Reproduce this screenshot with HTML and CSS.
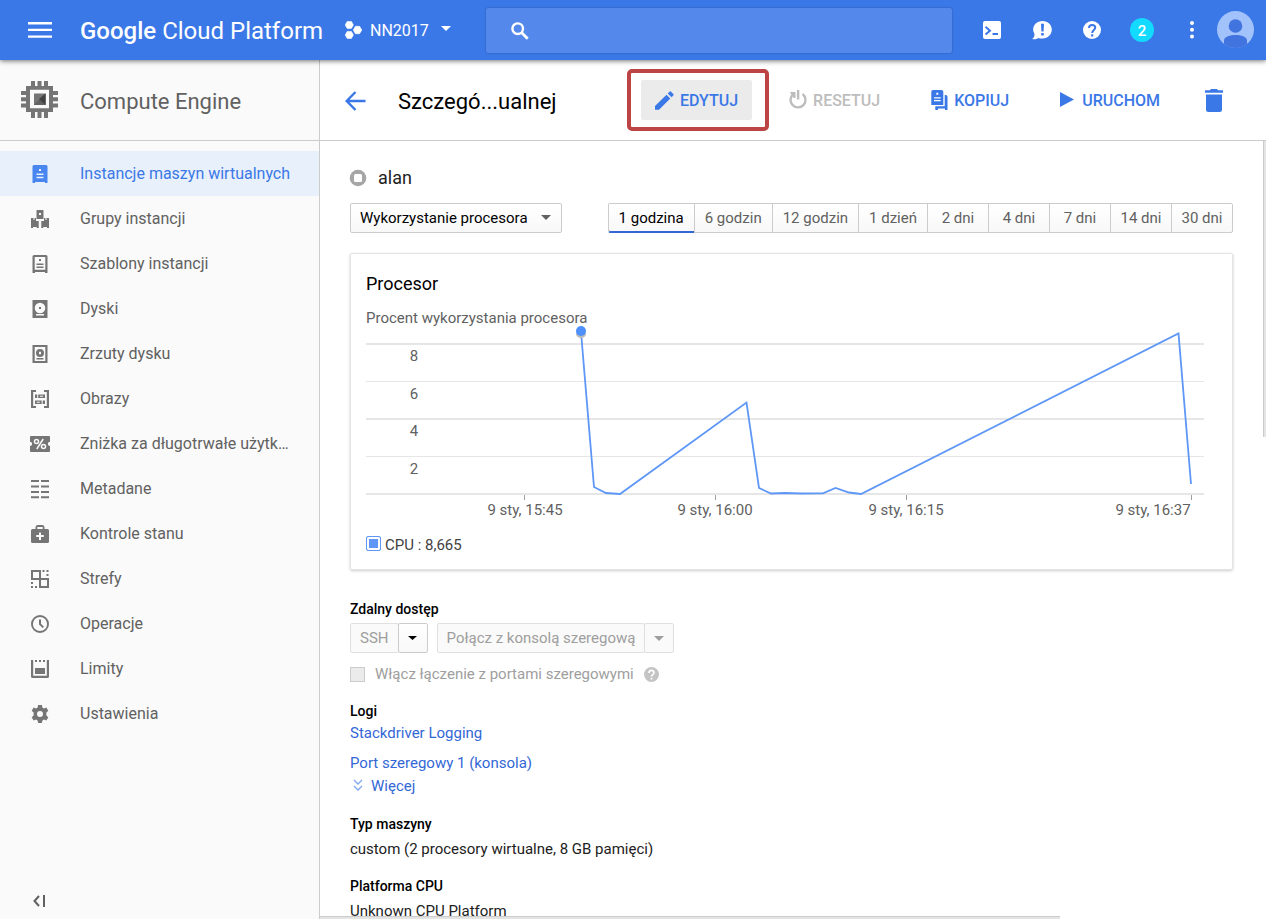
FILE: index.html
```html
<!DOCTYPE html>
<html lang="pl">
<head>
<meta charset="utf-8">
<title>Compute Engine – Google Cloud Platform</title>
<link rel="stylesheet" href="styles.css">
</head>
<body>
<header class="topbar">
  <button class="icon-btn menu-btn" aria-label="Menu">
    <svg width="24" height="18" viewBox="0 0 24 18" fill="currentColor"><path d="M0 1h24v2.400H0zM0 7.700h24v2.400H0zM0 14.400h24v2.400H0z"/></svg>
  </button>
  <a class="brand" href="#"><span class="brand-strong">Google</span> Cloud Platform</a>
  <button class="project">
    <svg width="17" height="18" viewBox="0 0 17 18" fill="currentColor"><path d="M2.200.4h4.200l2 3.500-2 3.500H2.200L.2 3.900zM2.200 10.400h4.200l2 3.500-2 3.500H2.200l-2-3.500zM10.400 5.300h4.200l2.200 3.700-2.200 3.700h-4.200L8.300 9z" stroke="currentColor" stroke-width=".6" stroke-linejoin="round"/></svg>
    <span>NN2017</span>
    <svg class="project-caret" width="10" height="5" viewBox="0 0 10 5" fill="currentColor"><path d="M0 0h10L5 5z"/></svg>
  </button>
  <form class="search">
    <svg width="18" height="18" viewBox="0 0 18 18" fill="none" stroke="currentColor"><circle cx="6.700" cy="6.700" r="5.300" stroke-width="2.400"/><path d="M10.500 10.500l6.200 6.200" stroke-width="2.800"/></svg>
    <input type="search" aria-label="Szukaj">
  </form>
  <div class="tools">
    <button class="icon-btn" aria-label="Cloud Shell">
      <svg width="18" height="18" viewBox="0 0 18 18"><rect width="18" height="18" rx="2" fill="#fff"/><path d="M2.500 5.800l4.500 3.900-4.500 3.900" fill="none" stroke="#3b78e7" stroke-width="2"/><path d="M9.500 12h5.500v2H9.500z" fill="#3b78e7"/></svg>
    </button>
    <button class="icon-btn" aria-label="Prześlij opinię">
      <svg width="20" height="20" viewBox="0 0 20 20"><path d="M10.500 1C5 1 1.200 4.800 1.200 9.500c0 2 .7 3.400 1.300 4.400 0 2.500-.7 3.600-2.300 5.200 3 .2 5-.4 6-1.200 1.300.5 2.700.7 4.300.6 5.500 0 9.300-4.200 9.300-9S16 1 10.500 1z" fill="#fff"/><path d="M9 3.800h3l-.4 7.700H9.400zM9.200 13h2.600v2.500H9.200z" fill="#3b78e7"/></svg>
    </button>
    <button class="icon-btn" aria-label="Pomoc">
      <svg width="18" height="18" viewBox="0 0 18 18"><circle cx="9" cy="9" r="9" fill="#fff"/><path d="M6 7c0-4 6.300-4 6.300-.4C12.300 9 9.200 9 9.200 12" fill="none" stroke="#3b78e7" stroke-width="2"/><path d="M8.100 13.300h2.200v2.200H8.100z" fill="#3b78e7"/></svg>
    </button>
    <button class="icon-btn" aria-label="Powiadomienia"><span class="notify">2</span></button>
    <button class="icon-btn" aria-label="Więcej opcji">
      <svg width="4" height="18" viewBox="0 0 4 18" fill="#fff"><circle cx="2" cy="2" r="2"/><circle cx="2" cy="8.700" r="2"/><circle cx="2" cy="15.400" r="2"/></svg>
    </button>
    <button class="avatar" aria-label="Konto">
      <svg width="37" height="38" viewBox="0 0 37 38"><circle cx="18.500" cy="18.500" r="18.500" fill="#a1c2fa"/><circle cx="18.500" cy="15" r="6.800" fill="#4274e0"/><path d="M7 33v-3.800c0-3.500 6.500-5.200 11.500-5.200S30 25.700 30 29.200V33A18.500 18.500 0 0 1 7 33z" fill="#4274e0"/></svg>
    </button>
  </div>
</header>

<div class="shell">
  <aside class="sidebar">
    <div class="product">
      <svg class="product-icon" width="38" height="38" viewBox="0 0 38 38" fill="#757575"><path d="M10 0h4v5h-4zM16.500 0h4v5h-4zM23 0h4v5h-4zM10 31h4v6h-4zM16.500 31h4v6h-4zM23 31h4v6h-4zM0 10h6v4H0zM0 16.200h6v4H0zM0 22.500h6v4H0zM31 10h6v4h-6zM31 16.200h6v4h-6zM31 22.500h6v4h-6z"/><path fill-rule="evenodd" d="M5 5h27v26H5zM9 8.800v18.500h19V8.800z"/><path d="M13 12.500h11.500v11.500H13z"/><path d="M24.500 12.500v11.500H13z" fill="#616161"/><path d="M24.500 12.500v11.500L18 18z" fill="#424242"/></svg>
      <h2>Compute Engine</h2>
    </div>
    <nav class="nav" aria-label="Compute Engine">
      <a class="nav-item active" href="#"><svg viewBox="0 0 18 18"><path fill-rule="evenodd" d="M3 0h12q1.500 0 1.500 1.500V18H14v-1H4v1H1.500V1.500Q1.500 0 3 0zM8 4v2h2V4zM5.500 8.500V10h7V8.500zM5.500 11.700v1.500h7v-1.500z"/></svg><span>Instancje maszyn wirtualnych</span></a>
      <a class="nav-item" href="#"><svg viewBox="0 0 18 18"><path fill-rule="evenodd" d="M6 0h6q.5 0 .5.500V9h-7V.500Q5.500 0 6 0zM8 3v2h2V3zM0 8h2.500v2h1V8H5v3h2.700v7H5.700v-1H2v1H0zM18 8h-2.500v2h-1V8H13v3h-2.700v7h2v-1H16v1h2z"/></svg><span>Grupy instancji</span></a>
      <a class="nav-item" href="#"><svg viewBox="0 0 18 18"><path fill-rule="evenodd" d="M3 0h12q1.500 0 1.500 1.500V18H14v-1H4v1H1.500V1.500Q1.500 0 3 0zM3.700 2v12.700h10.600V2zM8 4h2v2H8zM5.500 8.500h7V10h-7zM5.500 11.500h7V13h-7z"/></svg><span>Szablony instancji</span></a>
      <a class="nav-item" href="#"><svg viewBox="0 0 18 18"><path fill-rule="evenodd" d="M1.500 0h15v18h-15zM9 2.700a5 5 0 1 0 0 10.600A5 5 0 0 0 9 2.700zM5 14v1.600h8V14zM8 7h2v2H8z"/></svg><span>Dyski</span></a>
      <a class="nav-item" href="#"><svg viewBox="0 0 18 18"><path fill-rule="evenodd" d="M1.500 0h15v18h-15zM3.700 2v14h10.600V2zM9 4a4 4 0 1 1 0 8A4 4 0 0 1 9 4zM8 6.800v2.400h2V6.800zM5.500 13h7v1.500h-7z"/></svg><span>Zrzuty dysku</span></a>
      <a class="nav-item" href="#"><svg viewBox="0 0 18 18"><path fill-rule="evenodd" d="M0 0h5v2H2.200v14H5v2H0zM18 0h-5v2h2.800v14H13v2h5zM4 4.500h2.200V8H4zM7.200 4.500H14V8H7.200zM9 5.800v1h3v-1zM4 10.500h6.700V14H4zM5.800 11.800v1h3v-1zM11.700 10.500H14V14h-2.300z"/></svg><span>Obrazy</span></a>
      <a class="nav-item" href="#"><svg viewBox="0 0 18 18" class="wide"><path d="M-1 2q0-1 1-1h18q1 0 1 1v4.800a2 2 0 0 0 0 4.200v5q0 1-1 1H0q-1 0-1-1v-5a2 2 0 0 0 0-4.200z"/><g fill="none" stroke="#fafafa" stroke-width="1.500"><circle cx="5.500" cy="6.500" r="2"/><circle cx="12.500" cy="11.500" r="2"/><path d="M12.200 4L5.800 14"/></g></svg><span>Zniżka za długotrwałe użytk…</span></a>
      <a class="nav-item" href="#"><svg viewBox="0 0 18 18" class="wide"><path d="M0 0h8v2H0zM10 0h8v2h-8zM0 5.500h8v2H0zM10 5.500h8v2h-8zM0 11h8v2H0zM10 11h8v2h-8zM0 16.200h8v2H0zM10 16.200h8v2h-8z"/></svg><span>Metadane</span></a>
      <a class="nav-item" href="#"><svg viewBox="0 0 18 18"><path fill-rule="evenodd" d="M1.500 4h3V2.500Q4.500 0 7 0h4q2.500 0 2.500 2.500V4h3Q18 4 18 5.500v11q0 1.500-1.500 1.500h-15Q0 18 0 16.500v-11Q0 4 1.500 4zM6.300 4h5.400V2H6.300zM8 7.500v2.600H5.200v2H8V15h2v-2.900h2.800v-2H10V7.500z"/></svg><span>Kontrole stanu</span></a>
      <a class="nav-item" href="#"><svg viewBox="0 0 18 18"><path fill-rule="evenodd" d="M0 0h10v8h8v10H8v-8H0zM2 2v6h6V2zM10 10v6h6v-6zM11.500 0h2v2h-2zM15.500 0h2v2h-2zM15.500 4h2v2h-2zM0 12h2v2H0zM0 16h2v2H0zM4 16h2v2H4z"/></svg><span>Strefy</span></a>
      <a class="nav-item" href="#"><svg viewBox="0 0 18 18"><path fill-rule="evenodd" d="M9 0a9 9 0 1 1 0 18A9 9 0 0 1 9 0zM9 1.900a7.100 7.100 0 1 0 0 14.200A7.100 7.100 0 0 0 9 1.900zM8 4.500h2v4.300l3 3-1.300 1.300L8 9.600z"/></svg><span>Operacje</span></a>
      <a class="nav-item" href="#"><svg viewBox="0 0 18 18"><path d="M0 0h2.200v15.800h13.600V0H18v16.500q0 1.500-1.500 1.500h-15Q0 18 0 16.500zM4 0h2v2H4zM8 0h2v2H8zM12 0h2v2h-2zM4 8h10v6H4z"/></svg><span>Limity</span></a>
      <a class="nav-item" href="#"><svg viewBox="0 0 18 18"><path fill-rule="evenodd" d="M7.100 0h3.800l.5 2.500 1.600.9 2.400-.8 1.900 3.200-1.900 1.700v3l1.900 1.700-1.900 3.200-2.400-.8-1.600.9-.5 2.500H7.100l-.5-2.500-1.600-.9-2.400.8-1.900-3.200 1.900-1.700v-3L.7 5.800l1.900-3.200 2.400.8 1.600-.9zM9 6a3 3 0 1 0 0 6 3 3 0 0 0 0-6z"/></svg><span>Ustawienia</span></a>
    </nav>
    <button class="collapse" aria-label="Zwiń menu">
      <svg width="12" height="12" viewBox="0 0 12 12" fill="none" stroke="#616161" stroke-width="2"><path d="M6 1L1.500 6 6 11M11 0v12"/></svg>
    </button>
  </aside>

  <main class="main">
    <div class="actionbar">
      <button class="back" aria-label="Wstecz"><svg width="21" height="20" viewBox="0 0 21 20" fill="none" stroke="currentColor" stroke-width="2.400"><path d="M10.500 1L1.700 10l8.800 9M1.700 10H20.500"/></svg></button>
      <h1>Szczegó...ualnej</h1>
      <div class="actions">
        <button class="action edit"><svg width="19" height="20" viewBox="0 -1 19 20" fill="currentColor"><path d="M0 15L11.500 3.700l3.800 3.800L4 18.800H0zM12.700 2.500L14.500.7q.8-.7 1.600 0l2.200 2.200q.7.800 0 1.600l-1.800 1.800z"/></svg>EDYTUJ</button>
        <button class="action" disabled><svg width="18" height="20" viewBox="0 0 18 20"><path d="M4 4.300A7.500 7.500 0 1 0 13.600 4" fill="none" stroke="currentColor" stroke-width="2.400"/><path d="M7.900 0h2.400v9.500H7.900zM.8 2h5.700v6H4.700z" fill="currentColor"/></svg>RESETUJ</button>
        <button class="action"><svg width="17" height="20" viewBox="0 0 17 20" fill="currentColor"><path fill-rule="evenodd" d="M2 0h8.500q1.800 0 1.800 1.800V15H.3V1.800Q.3 0 2 0zM5.300 2.800v2h2v-2zM3 7.200v1.300h6.700V7.200zM3 10v1.300h6.700V10z"/><path d="M13.700 5h1q1.800 0 1.800 1.800V20H14v-1.500H7V20H4.300v-3.700h9.400z"/></svg>KOPIUJ</button>
        <button class="action run"><svg width="14" height="16" viewBox="0 0 14 16" fill="currentColor"><path d="M0 0l14 7.500L0 15z"/></svg>URUCHOM</button>
        <button class="action delete" aria-label="Usuń"><svg width="18" height="24" viewBox="0 -1 18 24" fill="currentColor"><path d="M0 1.300h5L6 0h6l1 1.300h5v2.500H0zM1 5.500h16v15.300q0 2.200-2.200 2.200H3.200Q1 23 1 20.800z"/></svg></button>
      </div>
      <div class="highlight" aria-hidden="true"></div>
    </div>

    <div class="content">
      <div class="instance">
        <svg width="17" height="17" viewBox="0 0 17 17"><circle cx="8" cy="8" r="8.300" fill="#a6a6a6"/><rect x="4" y="4" width="8" height="8" rx="1.500" fill="#fff"/></svg>
        <span>alan</span>
      </div>
      <div class="filters">
        <div class="metric">
          <select aria-label="Wskaźnik"><option>Wykorzystanie procesora</option></select>
          <svg width="10" height="5" viewBox="0 0 10 5" fill="#616161"><path d="M0 0h10L5 5z"/></svg>
        </div>
        <div class="ranges" role="group" aria-label="Zakres czasu">
          <button class="selected">1 godzina</button><button>6 godzin</button><button>12 godzin</button><button>1 dzień</button><button>2 dni</button><button>4 dni</button><button>7 dni</button><button>14 dni</button><button>30 dni</button>
        </div>
      </div>

      <section class="card">
        <h3>Procesor</h3>
        <p class="card-sub">Procent wykorzystania procesora</p>
        <svg class="chart" viewBox="0 1 838 191" role="img" aria-label="Wykres wykorzystania procesora">
          <g fill="#e6e6e6"><path d="M0 16h838v2H0zM0 54h838v1H0zM0 91h838v2H0zM0 129h838v1H0zM0 166h838v2H0z"/></g>
          <g fill="#9e9e9e"><path d="M158 168h1v5h-1zM349 168h1v5h-1zM540 168h1v5h-1zM825 168h1v5h-1z"/></g>
          <g class="axis">
            <text x="48" y="34">8</text><text x="48" y="72">6</text><text x="48" y="109">4</text><text x="48" y="147">2</text>
            <text x="159" y="188">9 sty, 15:45</text><text x="349" y="188">9 sty, 16:00</text><text x="540" y="188">9 sty, 16:15</text><text x="787" y="188">9 sty, 16:37</text>
          </g>
          <polyline points="215,5 228,160 240,166 254,167 380.500,75.500 393,161 405,166.500 419,166 435,166.500 457,166.300 469.500,161 483,165.500 495,167 812.500,6.500 825,157" fill="none" stroke="#5e97f6" stroke-width="1.800"/>
          <ellipse cx="215" cy="7" rx="5" ry="4" fill="#bbb"/>
          <circle cx="215" cy="4" r="5" fill="#4d90fe"/>
        </svg>
        <div class="legend"><span class="swatch"></span><span>CPU : 8,665</span></div>
      </section>

      <section class="block">
        <h4>Zdalny dostęp</h4>
        <div class="connect">
          <div class="split"><button disabled>SSH</button><button class="drop" aria-label="Opcje SSH"><svg width="9" height="4" viewBox="0 0 9 4" fill="currentColor"><path d="M0 0h9L4.500 4z"/></svg></button></div>
          <div class="split"><button disabled>Połącz z konsolą szeregową</button><button class="drop" disabled aria-label="Porty szeregowe"><svg width="10" height="5" viewBox="0 0 10 5" fill="currentColor"><path d="M0 0h10L5 5z"/></svg></button></div>
        </div>
        <div class="serial">
          <input type="checkbox" id="serial" disabled><label for="serial">Włącz łączenie z portami szeregowymi</label>
          <svg width="15" height="15" viewBox="0 0 15 15"><circle cx="7.500" cy="7.500" r="7.500" fill="#c4c4c4"/><path d="M5 6c0-3.400 5-3.300 5-.4 0 2-2.500 2-2.500 4" fill="none" stroke="#fff" stroke-width="1.700"/><path d="M6.600 10.800h1.800v1.700H6.600z" fill="#fff"/></svg>
        </div>
      </section>

      <section class="block">
        <h4>Logi</h4>
        <a class="link spaced" href="#">Stackdriver Logging</a>
        <a class="link" href="#">Port szeregowy 1 (konsola)</a>
        <a class="link more" href="#"><svg width="10" height="12" viewBox="0 0 10 12" fill="none" stroke="#7fa6ee" stroke-width="1.300"><path d="M1 1l4 4 4-4M1 7l4 4 4-4"/></svg>Więcej</a>
      </section>

      <section class="block pair">
        <h4>Typ maszyny</h4>
        <p>custom (2 procesory wirtualne, 8 GB pamięci)</p>
      </section>
      <section class="block pair">
        <h4>Platforma CPU</h4>
        <p>Unknown CPU Platform</p>
      </section>
      <div class="scroll-y" aria-hidden="true"></div>
      <div class="scroll-x" aria-hidden="true"></div>
    </div>
  </main>
</div>
</body>
</html>
```
FILE: styles.css
```css
* { box-sizing: border-box; }
body {
  margin: 0;
  height: 100vh;
  display: flex;
  flex-direction: column;
  overflow: hidden;
  font: 15px/20px Roboto, "Noto Sans", sans-serif;
  color: #212121;
  background: #fff;
}
h1, h2, h3, h4, p { margin: 0; font-weight: 400; }
button, input, select { font: inherit; color: inherit; }
button { background: none; border: 0; padding: 0; margin: 0; }
a { color: inherit; text-decoration: none; }
svg { display: block; flex: none; }

/* Top bar */
.topbar {
  position: relative;
  z-index: 2;
  flex: none;
  display: flex;
  align-items: center;
  height: 60px;
  padding-right: 12px;
  background: #3b78e7;
  color: #fff;
  box-shadow: 0 1px 5px rgba(0, 0, 0, .55);
}
.icon-btn { display: flex; align-items: center; justify-content: center; width: 50px; height: 50px; }
.menu-btn { width: 80px; }
.brand { width: 265px; font-size: 24px; line-height: 32px; padding-top: 2px; white-space: nowrap; }
.brand-strong { font-weight: 500; }
.project { display: flex; align-items: center; gap: 8px; width: 141px; font-size: 16px; }
.project span { padding-top: 2px; }
.project-caret { margin-left: 4px; margin-bottom: 3px; }
.search {
  flex: 1;
  display: flex;
  align-items: center;
  gap: 16px;
  height: 45px;
  margin-right: 15px;
  padding: 2px 25px 0;
  border-radius: 2px;
  background: #5488eb;
  box-shadow: 0 0 2px rgba(0, 0, 0, .35);
}
.search input { flex: 1; min-width: 0; border: 0; outline: 0; background: none; }
.tools { display: flex; align-items: center; }
.notify { width: 24px; height: 24px; border-radius: 50%; background: #12dbff; font-weight: 500; line-height: 26px; }

/* Shell */
.shell { flex: 1; min-height: 0; display: grid; grid-template-columns: 320px minmax(0, 1fr); }
.sidebar { display: flex; flex-direction: column; min-height: 0; border-right: 1px solid #ccc; background: #fafafa; color: #616161; }
.product { display: flex; align-items: center; gap: 21px; height: 81px; padding-left: 21px; border-bottom: 1px solid #ccc; }
.product h2 { font-size: 22px; line-height: 28px; padding-top: 4px; }
.nav { flex: 1; padding-top: 10px; font-size: 16px; }
.nav-item { display: flex; align-items: center; gap: 31px; height: 45px; padding: 1px 20px 0 31px; }
.nav-item svg { width: 18px; height: 18px; fill: #757575; }
.nav-item .wide { overflow: visible; }
.nav-item span { white-space: nowrap; }
.nav-item.active { background: #e8f0fb; color: #3b78e7; }
.nav-item.active svg { fill: #4a86f0; }
.collapse { align-self: flex-start; padding: 12px 33px; }

/* Action bar */
.main { display: flex; flex-direction: column; min-height: 0; }
.actionbar { position: relative; flex: none; display: flex; align-items: center; height: 81px; padding: 0 29px 0 25px; border-bottom: 1px solid #ccc; }
.back { padding-top: 2px; color: #3b78e7; }
.actionbar h1 { margin-left: 32px; padding-top: 4px; font-size: 22px; line-height: 28px; color: #000; }
.actions { display: flex; align-items: center; gap: 23px; margin-left: auto; }
.action { display: flex; align-items: center; gap: 6px; height: 40px; padding: 2px 14px 0; border-radius: 2px; color: #3b78e7; font-size: 16px; font-weight: 500; }
.action svg { margin-bottom: 2px; }
.action:disabled { color: #bdbdbd; }
.edit { background: #ebebeb; }
.run { gap: 8px; }
.delete { padding-left: 8px; }
.highlight { position: absolute; left: 307px; top: 9px; width: 142px; height: 62px; border: 4px solid #bc4444; border-radius: 5px; }

/* Content */
.content { position: relative; flex: 1; min-height: 0; overflow: hidden; padding: 26px 33px 0 30px; }
.instance { display: flex; align-items: center; gap: 11px; height: 22px; font-size: 18px; }
.instance svg { overflow: visible; }
.filters { display: flex; justify-content: space-between; margin-top: 14px; }
.metric { position: relative; width: 212px; }
.metric select { width: 100%; height: 30px; padding: 0 9px; appearance: none; border: 1px solid #ccc; border-radius: 2px; background: linear-gradient(#fff, #f8f8f8); color: #000; }
.metric svg { position: absolute; right: 11px; top: 12px; pointer-events: none; }
.ranges { display: flex; }
.ranges button { min-width: 62px; height: 30px; padding: 0 9px; margin-left: -1px; border: 1px solid #ccc; background: linear-gradient(#fff, #f8f8f8); color: #616161; }
.ranges button:nth-child(-n+4) { padding: 0 10px; }
.ranges button:first-child { margin-left: 0; border-radius: 2px 0 0 2px; }
.ranges button:last-child { border-radius: 0 2px 2px 0; }
.ranges .selected { color: #000; box-shadow: inset 0 -1px #3367d6; border-bottom-color: #3367d6; }
.card { margin-top: 20px; padding: 19px 28px 9px 15px; border: 1px solid #e4e4e4; border-radius: 2px; box-shadow: 0 1px 3px rgba(0, 0, 0, .2); }
.card h3 { font-size: 18px; line-height: 22px; color: #000; }
.card-sub { margin-top: 13px; color: #616161; }
.chart { width: 100%; height: auto; overflow: visible; }
.axis text { font-size: 15px; fill: #616161; text-anchor: middle; }
.legend { display: flex; align-items: center; gap: 4px; height: 30px; margin-top: 11px; color: #424242; }
.swatch { width: 15px; height: 15px; margin-bottom: 4px; border: 1px solid #5e97f6; border-radius: 2px; background: #5e97f6; box-shadow: inset 0 0 0 2px #fff; }

.block { margin-top: 27px; }
.block h4 { color: #000; font-size: 14px; font-weight: 500; line-height: 24px; }
.card + .block { margin-top: 27px; }
.connect { display: flex; gap: 9px; margin-top: 2px; }
.split { display: flex; }
.split button { height: 30px; padding: 0 9px; border: 1px solid #ccc; border-radius: 2px; background: linear-gradient(#fff, #f8f8f8); color: #000; }
.split button:disabled { border-color: #e0e0e0; background: #fafafa; color: #9e9e9e; }
.split .drop { display: flex; align-items: center; justify-content: center; width: 30px; padding: 0; margin-left: -1px; }
.serial { display: flex; align-items: center; gap: 10px; margin-top: 11px; color: #9e9e9e; }
.serial input { appearance: none; width: 15px; height: 15px; margin: 0; border: 1px solid #ccc; background: #ebebeb; }
.link { display: block; width: max-content; color: #3367d6; }
.spaced { margin-bottom: 10px; }
.more { display: flex; gap: 8px; margin-top: 3px; padding-left: 3px; }
.more svg { margin-top: 3px; }
.block + .block { margin-top: 15px; }
.block + .pair { margin-top: 16px; }
.pair p { margin-top: 3px; }
.pair + .pair { margin-top: 15px; }
.scroll-y { position: absolute; right: 0; top: 0; width: 3px; height: 296px; background: #e4e4e4; border-left: 1px solid #ccc; }
.scroll-x { position: absolute; left: 0; bottom: 0; width: 740px; height: 3px; background: #e4e4e4; border-top: 1px solid #ccc; }
```
